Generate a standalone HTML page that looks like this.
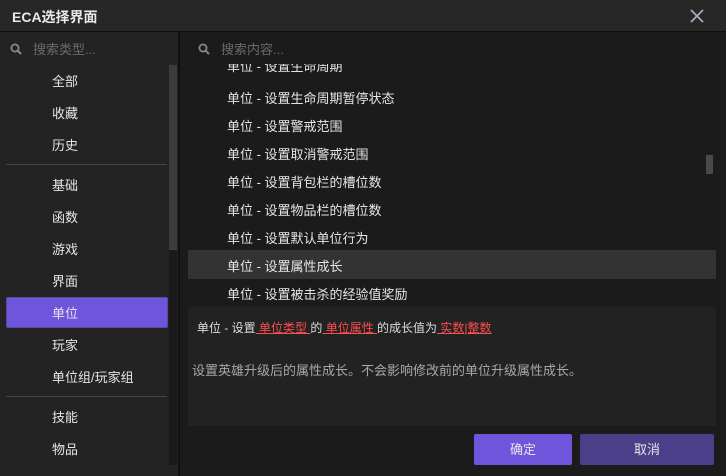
<!DOCTYPE html>
<html><head><meta charset="utf-8"><style>
*{margin:0;padding:0;box-sizing:border-box}
body{width:726px;height:476px;background:#1b1b1b;font-family:"Liberation Sans","Noto Sans CJK SC",sans-serif;overflow:hidden;position:relative;color:#e6e6e6;font-size:13px}
.abs{position:absolute}
#title{left:0;top:0;width:726px;height:32px;background:#272727;border-bottom:1px solid #0e0e0e}
#title span{position:absolute;left:12px;top:7px;font-size:14px;font-weight:bold;color:#e8e8e8}
#left{left:0;top:32px;width:180px;height:444px;background:#232323;border-right:2px solid #111}
.li{position:absolute;left:52px;font-size:13px;color:#e6e6e6}
.sep{position:absolute;left:6px;width:161px;height:1px;background:#444}
.ri{position:absolute;left:227px;font-size:13px;color:#e6e6e6}
.ph{color:#6a6a6a;font-size:13px}
.red{color:#ff4d4d;text-decoration:underline}
</style></head><body>
<div id="title" class="abs"><span>ECA选择界面</span>
<svg class="abs" style="left:690px;top:9px" width="14" height="14"><path d="M1 1L13 13M13 1L1 13" stroke="#aab" stroke-width="1.8"/></svg></div>
<div id="left" class="abs">
<svg class="abs" style="left:10px;top:11px" width="12" height="12"><circle cx="5" cy="5" r="3.6" stroke="#888" stroke-width="1.8" fill="none"/><path d="M7.5 7.5L11 11" stroke="#888" stroke-width="2"/></svg>
<span class="abs ph" style="left:33px;top:7px">搜索类型...</span>
<div class="abs" style="left:169px;top:33px;width:8px;height:400px;background:#1a1a1a"></div>
<div class="abs" style="left:169px;top:33px;width:8px;height:185px;background:#3c3c3c"></div>
<div class="abs" style="left:6px;top:265px;width:162px;height:31px;background:#6f55dc;border:1px solid #5a4a9a;border-radius:2px"></div>
<span class="li" style="top:39px">全部</span>
<span class="li" style="top:71px">收藏</span>
<span class="li" style="top:103px">历史</span>
<div class="sep" style="top:132px"></div>
<span class="li" style="top:143px">基础</span>
<span class="li" style="top:175px">函数</span>
<span class="li" style="top:207px">游戏</span>
<span class="li" style="top:239px">界面</span>
<span class="li" style="top:271px">单位</span>
<span class="li" style="top:303px">玩家</span>
<span class="li" style="top:335px">单位组/玩家组</span>
<div class="sep" style="top:364px"></div>
<span class="li" style="top:375px">技能</span>
<span class="li" style="top:407px">物品</span>
</div>
<div class="abs" style="left:182px;top:33px;width:544px;height:31px;background:#1b1b1b"></div>
<svg class="abs" style="left:198px;top:43px" width="12" height="12"><circle cx="5" cy="5" r="3.6" stroke="#888" stroke-width="1.8" fill="none"/><path d="M7.5 7.5L11 11" stroke="#888" stroke-width="2"/></svg>
<span class="abs ph" style="left:221px;top:39px">搜索内容...</span>
<div class="abs" style="left:188px;top:64px;width:528px;height:243px;overflow:hidden">
<div class="abs" style="left:0;top:186px;width:528px;height:29px;background:#333"></div>
<span class="ri" style="left:39px;top:-8px">单位 - 设置生命周期</span>
<span class="ri" style="left:39px;top:24px">单位 - 设置生命周期暂停状态</span>
<span class="ri" style="left:39px;top:52px">单位 - 设置警戒范围</span>
<span class="ri" style="left:39px;top:80px">单位 - 设置取消警戒范围</span>
<span class="ri" style="left:39px;top:108px">单位 - 设置背包栏的槽位数</span>
<span class="ri" style="left:39px;top:136px">单位 - 设置物品栏的槽位数</span>
<span class="ri" style="left:39px;top:164px">单位 - 设置默认单位行为</span>
<span class="ri" style="left:39px;top:192px">单位 - 设置属性成长</span>
<span class="ri" style="left:39px;top:220px">单位 - 设置被击杀的经验值奖励</span>
<div class="abs" style="left:518px;top:91px;width:7px;height:19px;background:#4a4a4a"></div>
</div>
<div class="abs" style="left:188px;top:307px;width:528px;height:119px;background:#222">
<div class="abs" style="left:9px;top:12px;font-size:12px;color:#ddd">单位 - 设置<span class="red"> 单位类型 </span>的<span class="red"> 单位属性 </span>的成长值为<span class="red"> 实数|整数 </span></div>
<div class="abs" style="left:4px;top:53px;font-size:13px;color:#a8a8a8">设置英雄升级后的属性成长。不会影响修改前的单位升级属性成长。</div>
</div>
<div class="abs" style="left:474px;top:434px;width:98px;height:31px;background:#6f55dc;border-radius:2px;text-align:center;line-height:31px;font-size:13px">确定</div>
<div class="abs" style="left:580px;top:434px;width:134px;height:31px;background:#4b3f8a;border-radius:2px;text-align:center;line-height:31px;font-size:13px">取消</div>
</body></html>
